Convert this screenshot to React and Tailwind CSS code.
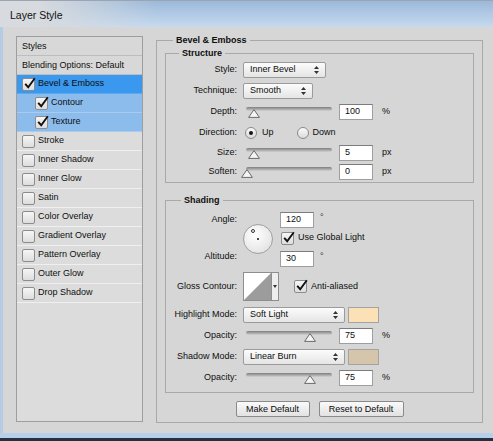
import React from 'react';

// Photoshop "Layer Style" dialog (Bevel & Emboss page)

const FONT = "font-['Liberation_Sans',Arial,sans-serif]";

const LAYERS = [
  { label: 'Bevel & Emboss', checked: true, tone: 'active' },
  { label: 'Contour', checked: true, tone: 'sub', indent: true },
  { label: 'Texture', checked: true, tone: 'sub', indent: true },
  { label: 'Stroke' },
  { label: 'Inner Shadow' },
  { label: 'Inner Glow' },
  { label: 'Satin' },
  { label: 'Color Overlay' },
  { label: 'Gradient Overlay' },
  { label: 'Pattern Overlay' },
  { label: 'Outer Glow' },
  { label: 'Drop Shadow' },
];

const TONES = {
  active: 'bg-[#3a98ef] border-[#5aa9f2]',
  sub: 'bg-[#8cbcec] border-[#a8ccef]',
  plain: 'bg-[#dcdcdc] border-[#efefef]',
};

const Check = ({ checked }) => (
  <span className="relative flex h-[13px] w-[13px] shrink-0 rounded-[2px] border border-[#8c8c8c] bg-linear-to-b from-[#f6f6f6] to-[#dddddd]">
    {checked && (
      <svg viewBox="0 0 13 13" className="absolute -top-[2px] left-[0px] h-[13px] w-[13px] overflow-visible">
        <path d="M2.2 6.8 L5.2 10.2 L11.8 1.2" fill="none" stroke="#111" strokeWidth="1.9" />
      </svg>
    )}
  </span>
);

const Radio = ({ on }) => (
  <span className="flex h-[12px] w-[12px] shrink-0 items-center justify-center rounded-full border border-[#8a8a8a] bg-linear-to-b from-[#fbfbfb] to-[#dadada]">
    {on && <span className="h-[4px] w-[4px] rounded-full bg-[#151515]" />}
  </span>
);

const Select = ({ value, w }) => (
  <div className={`flex h-[16px] ${w} items-center justify-between rounded-[2px] border border-[#9b9b9b] bg-linear-to-b from-[#fcfcfc] to-[#e5e5e5] pl-[6px] pr-[6px]`}>
    <span>{value}</span>
    <svg width="5" height="8" viewBox="0 0 5 8">
      <path d="M2.5 0 L5 3 H0Z M0 5 H5 L2.5 8Z" fill="#333" />
    </svg>
  </div>
);

const Slider = ({ pos }) => (
  <div className="relative h-[14px] w-[86px] shrink-0">
    <div className="absolute left-0 right-0 top-[2px] h-[4px] rounded-full bg-linear-to-b from-[#7e7e7e] to-[#d2d2d2]" />
    <svg className={`absolute top-[4px] ${pos}`} width="12" height="9" viewBox="0 0 12 9">
      <path d="M6 0.6 L11.4 8.4 H0.6Z" fill="#f5f5f5" stroke="#6a6a6a" />
    </svg>
  </div>
);

const Num = ({ value, w = 'w-[34px]' }) => (
  <div className={`flex h-[16px] ${w} shrink-0 items-center border border-[#9e9e9e] border-t-[#7c7c7c] bg-white pl-[5px]`}>
    {value}
  </div>
);

const Label = ({ children }) => (
  <span className="w-[71px] shrink-0 text-right">{children}</span>
);

const Row = ({ h, label, children }) => (
  <div className={`flex ${h} items-center`}>
    <Label>{label}</Label>
    {children}
  </div>
);

const SliderRow = ({ h, label, pos, value, unit }) => (
  <Row h={h} label={label}>
    <div className="ml-[9px]">
      <Slider pos={pos} />
    </div>
    <div className="ml-[7px]">
      <Num value={value} />
    </div>
    <span className="ml-[9px]">{unit}</span>
  </Row>
);

const Group = ({ title, legend, className, children }) => (
  <fieldset className={`border border-[#a9a9a9] ${className}`}>
    <legend className={`px-[3px] font-bold leading-[12px] ${legend}`}>{title}</legend>
    {children}
  </fieldset>
);

const ListRow = ({ label, checked, tone = 'plain', indent }) => (
  <div className={`flex h-[19px] items-center gap-[3px] border-b ${indent ? 'pl-[18px]' : 'pl-[5px]'} ${TONES[tone]}`}>
    <Check checked={checked} />
    <span>{label}</span>
  </div>
);

const Button = ({ children, w }) => (
  <button className={`h-[16px] ${w} rounded-[2px] border border-[#8a8a8a] bg-linear-to-b from-[#fafafa] to-[#e2e2e2] leading-[14px] text-[#0a0a0a]`}>
    {children}
  </button>
);

const Degree = () => <span className="ml-[6px] leading-[10px] text-[#333]">°</span>;

export default function App() {
  return (
    <div className={`flex h-[441px] w-[493px] flex-col overflow-hidden whitespace-nowrap bg-[#d6d6d6] text-[9px] text-[#0e0e0e] ${FONT}`}>
      {/* TITLE BAR */}
      <div className="flex h-[27px] shrink-0 items-center border-t border-[#9aa5b1] bg-[linear-gradient(to_right,#d7dade,#d7dade_8%,rgba(215,218,222,0)_32%),linear-gradient(to_bottom,#9cb9da,#c6daef)] pl-[10px] pt-[3px] text-[10.5px] text-[#111]">
        Layer Style
      </div>

      {/* BODY */}
      <div className="flex flex-1 items-start border-l-[3px] border-[#b6cce4] pl-[13px] pt-[9px]">
        {/* STYLES LIST */}
        <div className="h-[386px] w-[127px] shrink-0 border border-[#9e9e9e] bg-[#dcdcdc]">
          <div className="flex h-[19px] items-center border-b border-[#bdbdbd] bg-[#d8d8d8] pl-[5px] pt-[1px]">Styles</div>
          <div className="flex h-[19px] items-center border-b border-[#bdbdbd] bg-[#d8d8d8] pl-[5px] pt-[1px]">Blending Options: Default</div>
          {LAYERS.map((l) => (
            <ListRow key={l.label} {...l} />
          ))}
        </div>

        {/* BEVEL & EMBOSS */}
        <fieldset className="ml-[13px] h-[387px] w-[327px] shrink-0 border border-[#a9a9a9]">
          <legend className="ml-[16px] px-[3px] font-bold leading-[8px]">Bevel &amp; Emboss</legend>

          <Group title="Structure" legend="ml-[13px]" className="mx-[8px] mt-[3px] pt-[1px]">
            <Row h="h-[20px]" label="Style:">
              <div className="ml-[6px]">
                <Select value="Inner Bevel" w="w-[83px]" />
              </div>
            </Row>
            <Row h="h-[21px]" label="Technique:">
              <div className="ml-[6px]">
                <Select value="Smooth" w="w-[70px]" />
              </div>
            </Row>
            <SliderRow h="h-[21px]" label="Depth:" pos="left-[2px]" value="100" unit="%" />
            <Row h="h-[21px]" label="Direction:">
              <div className="ml-[8px] flex items-center gap-[5px]">
                <Radio on />
                <span>Up</span>
              </div>
              <div className="ml-[23px] flex items-center gap-[4px]">
                <Radio />
                <span>Down</span>
              </div>
            </Row>
            <SliderRow h="h-[19px]" label="Size:" pos="left-[2px]" value="5" unit="px" />
            <SliderRow h="h-[20px]" label="Soften:" pos="-left-[5px]" value="0" unit="px" />
          </Group>

          <Group title="Shading" legend="ml-[15px]" className="mx-[8px] mt-[11px] pb-[4px] pt-[5px]">
            {/* ANGLE / ALTITUDE */}
            <div className="flex h-[56px]">
              <div className="flex w-[71px] shrink-0 flex-col items-end pt-[2px]">
                <span className="leading-[13px]">Angle:</span>
                <span className="mt-[24px] leading-[13px]">Altitude:</span>
              </div>
              <div className="relative ml-[6px] mt-[13px] h-[30px] w-[30px] shrink-0 rounded-full border border-[#a0a0a0] bg-[radial-gradient(circle_at_40%_35%,#ffffff,#e6e6e6_70%,#d4d4d4)]">
                <span className="absolute left-[7px] top-[4px] h-[4px] w-[4px] rounded-full border border-[#333]" />
                <span className="absolute left-[13px] top-[13px] h-[2px] w-[2px] rounded-full bg-[#111]" />
              </div>
              <div className="ml-[7px] flex flex-col">
                <div className="mt-[1px] flex items-start">
                  <Num value="120" />
                  <Degree />
                </div>
                <div className="ml-[1px] mt-[3px] flex h-[14px] items-center gap-[4px]">
                  <Check checked />
                  <span>Use Global Light</span>
                </div>
                <div className="mt-[6px] flex items-start">
                  <Num value="30" />
                  <Degree />
                </div>
              </div>
            </div>

            {/* GLOSS CONTOUR */}
            <Row h="mt-[4px] h-[31px]" label="Gloss Contour:">
              <div className="ml-[6px] flex">
                <div className="h-[29px] w-[29px] border border-[#8e8e8e] bg-white">
                  <svg viewBox="0 0 27 27" className="h-full w-full">
                    <path d="M0 27 L27 0 V27Z" fill="#9c9c9c" />
                  </svg>
                </div>
                <div className="flex h-[29px] w-[7px] items-center justify-center border border-l-0 border-[#8e8e8e] bg-[#eeeeee]">
                  <svg width="4" height="3" viewBox="0 0 4 3">
                    <path d="M0 0 H4 L2 3Z" fill="#333" />
                  </svg>
                </div>
              </div>
              <div className="ml-[15px] flex items-center gap-[4px]">
                <Check checked />
                <span>Anti-aliased</span>
              </div>
            </Row>

            {/* HIGHLIGHT / SHADOW */}
            <Row h="mt-[2px] h-[21px]" label="Highlight Mode:">
              <div className="ml-[6px]">
                <Select value="Soft Light" w="w-[102px]" />
              </div>
              <div className="ml-[3px] h-[16px] w-[31px] border border-[#a3a3a3] bg-[#fde1b6]" />
            </Row>
            <SliderRow h="h-[21px]" label="Opacity:" pos="left-[58px]" value="75" unit="%" />
            <Row h="h-[21px]" label="Shadow Mode:">
              <div className="ml-[6px]">
                <Select value="Linear Burn" w="w-[102px]" />
              </div>
              <div className="ml-[3px] h-[16px] w-[31px] border border-[#a3a3a3] bg-[#d5c5aa]" />
            </Row>
            <SliderRow h="h-[21px]" label="Opacity:" pos="left-[58px]" value="75" unit="%" />
          </Group>

          {/* BUTTONS */}
          <div className="mt-[8px] flex justify-center gap-[9px]">
            <Button w="w-[74px]">Make Default</Button>
            <Button w="w-[85px]">Reset to Default</Button>
          </div>
        </fieldset>
      </div>

      {/* WINDOW BOTTOM EDGE */}
      <div className="h-[5px] shrink-0 bg-[#b7cfe8]" />
      <div className="h-[3px] shrink-0 bg-[#24323f]" />
    </div>
  );
}
